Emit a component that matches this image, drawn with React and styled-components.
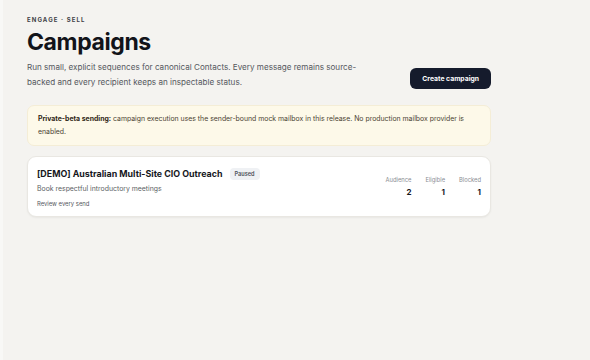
import React from "react";
import styled, { createGlobalStyle } from "styled-components";

const Global = createGlobalStyle`
  html, body { margin: 0; padding: 0; background: #f4f3f0; }
  body { font-family: Inter, "Helvetica Neue", Arial, sans-serif; -webkit-font-smoothing: antialiased; }
  * { box-sizing: border-box; }
`;

const Page = styled.div`
  min-height: 360px;
  border-left: 3px solid #f8f8f6;
  padding: 16px 0 0 24px;
`;

const Main = styled.main`
  width: 464px;
  display: flex;
  flex-direction: column;
`;

const Eyebrow = styled.div`
  font-size: 6px;
  font-weight: 700;
  letter-spacing: 1.1px;
  color: #3f4247;
  text-transform: uppercase;
  line-height: 8px;
`;

const Title = styled.h1`
  margin: 4px 0 0;
  font-size: 23px;
  font-weight: 700;
  letter-spacing: -0.4px;
  color: #12141a;
  line-height: 28px;
`;

const HeaderRow = styled.div`
  display: flex;
  justify-content: space-between;
  align-items: flex-end;
  margin-top: 4px;
`;

const Lede = styled.p`
  margin: 0;
  width: 330px;
  font-size: 8.1px;
  line-height: 15px;
  color: #55585e;
`;

const PrimaryButton = styled.button`
  height: 21px;
  padding: 0 12px;
  border: none;
  border-radius: 6px;
  background: #151b2c;
  color: #fff;
  font-family: inherit;
  font-size: 6.8px;
  font-weight: 700;
  margin-bottom: 1px;
`;

const Notice = styled.div`
  margin-top: 15px;
  padding: 6px 10px 7px;
  background: #fdf9e9;
  border: 1px solid #f4edd6;
  border-radius: 7px;
  font-size: 6.9px;
  line-height: 13px;
  color: #4a4232;
  strong { font-weight: 700; color: #2f2716; }
`;

const Card = styled.section`
  margin-top: 10px;
  background: #fff;
  border: 1px solid #e9e7e2;
  border-radius: 9px;
  box-shadow: 0 1px 2px rgba(0, 0, 0, 0.05);
  padding: 10px 9px 8px 9px;
  display: flex;
  justify-content: space-between;
  align-items: flex-start;
`;

const Info = styled.div`
  display: flex;
  flex-direction: column;
`;

const NameRow = styled.div`
  display: flex;
  align-items: center;
  gap: 7px;
`;

const Name = styled.h2`
  margin: 0;
  font-size: 8.9px;
  font-weight: 700;
  color: #15171c;
  line-height: 14px;
`;

const Badge = styled.span`
  background: #eff1f4;
  border-radius: 4px;
  padding: 2px 5px;
  font-size: 5.6px;
  font-weight: 600;
  color: #4b5058;
  line-height: 8px;
`;

const Sub = styled.div`
  margin-top: 2px;
  font-size: 6.9px;
  color: #5c5f65;
  line-height: 11px;
`;

const Meta = styled.div`
  margin-top: 5px;
  font-size: 5.9px;
  color: #55585e;
  line-height: 9px;
`;

const Stats = styled.div`
  display: flex;
  gap: 14px;
  margin-top: 9px;
`;

const Stat = styled.div`
  display: flex;
  flex-direction: column;
  align-items: flex-end;
`;

const StatLabel = styled.span`
  font-size: 5.8px;
  color: #8a8d93;
  line-height: 8px;
`;

const StatValue = styled.span`
  margin-top: 3px;
  font-size: 8px;
  font-weight: 700;
  color: #17191e;
  line-height: 10px;
`;

const stats = [
  { label: "Audience", value: 2 },
  { label: "Eligible", value: 1 },
  { label: "Blocked", value: 1 },
];

export default function App() {
  return (
    <>
      <Global />
      <Page>
        <Main>
          <Eyebrow>Engage · Sell</Eyebrow>
          <Title>Campaigns</Title>
          <HeaderRow>
            <Lede>
              Run small, explicit sequences for canonical Contacts. Every message remains source-backed and every recipient keeps an inspectable status.
            </Lede>
            <PrimaryButton>Create campaign</PrimaryButton>
          </HeaderRow>
          <Notice>
            <strong>Private-beta sending:</strong> campaign execution uses the sender-bound mock mailbox in this release. No production mailbox provider is enabled.
          </Notice>
          <Card>
            <Info>
              <NameRow>
                <Name>[DEMO] Australian Multi-Site CIO Outreach</Name>
                <Badge>Paused</Badge>
              </NameRow>
              <Sub>Book respectful introductory meetings</Sub>
              <Meta>Review every send</Meta>
            </Info>
            <Stats>
              {stats.map((s) => (
                <Stat key={s.label}>
                  <StatLabel>{s.label}</StatLabel>
                  <StatValue>{s.value}</StatValue>
                </Stat>
              ))}
            </Stats>
          </Card>
        </Main>
      </Page>
    </>
  );
}
